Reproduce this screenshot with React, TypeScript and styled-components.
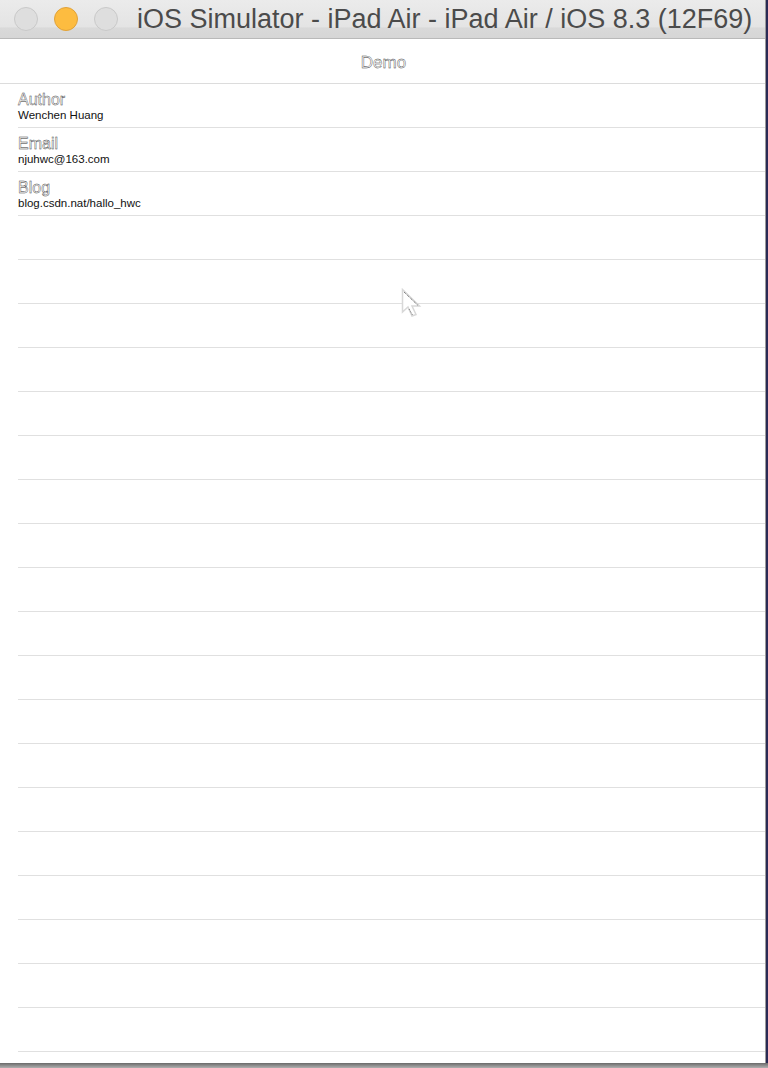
import React from "react";
import styled, { createGlobalStyle } from "styled-components";

const Global = createGlobalStyle`
  html, body { margin: 0; padding: 0; }
  body {
    width: 768px;
    height: 1068px;
    overflow: hidden;
    background: linear-gradient(#8a8a8a, #5a5a5a);
    font-family: "Liberation Sans", Arial, sans-serif;
  }
`;

const Desktop = styled.div`
  width: 768px;
  height: 1068px;
  display: flex;
  flex-direction: column;
  background: #2a2a55;
`;

const Window = styled.div`
  position: relative;
  width: 765px;
  height: 1063px;
  display: flex;
  flex-direction: column;
  background: #ffffff;
  border-right: 1px solid #9a9a9a;
  overflow: hidden;
`;

const BottomShade = styled.div`
  height: 5px;
  background: linear-gradient(#6a6a6a, #b0b0b0);
`;

const TitleBar = styled.div`
  height: 38px;
  display: flex;
  align-items: center;
  background: linear-gradient(#ebebeb 0%, #e4e4e4 70%, #d9d9d9 74%, #d6d6d6 100%);
  border-bottom: 1px solid #b9b9b9;
  padding-left: 14px;
  box-sizing: content-box;
`;

const Light = styled.div<{ $yellow?: boolean }>`
  width: 24px;
  height: 24px;
  border-radius: 50%;
  box-sizing: border-box;
  margin-right: 16px;
  background: ${(p) => (p.$yellow ? "#fdbc40" : "#dedede")};
  border: 1px solid ${(p) => (p.$yellow ? "#e0a23a" : "#c9c9c9")};
`;

const WindowTitle = styled.div`
  margin-left: 3px;
  font-size: 27px;
  color: #4b4b4b;
  white-space: nowrap;
  padding-top: 1px;
`;

const NavBar = styled.div`
  height: 44px;
  display: flex;
  align-items: center;
  justify-content: center;
  border-bottom: 1px solid #dcdcdc;
`;

const NavTitle = styled.div`
  font-size: 17px;
  color: #ffffff;
  -webkit-text-stroke: 0.4px #333333;
  padding-left: 2px;
  padding-top: 4px;
`;

const List = styled.div`
  display: flex;
  flex-direction: column;
`;

const Row = styled.div`
  height: 43px;
  box-sizing: border-box;
  padding-top: 3px;
  margin-left: 18px;
  border-bottom: 1px solid #e0e0e0;
  display: flex;
  flex-direction: column;
  justify-content: center;
  height: 44px;
`;

const RowTitle = styled.div`
  font-size: 16px;
  line-height: 17px;
  color: #ffffff;
  -webkit-text-stroke: 0.4px #333333;
`;

const RowSub = styled.div`
  font-size: 11.5px;
  line-height: 15px;
  color: #111111;
`;

const Cursor = styled.svg`
  position: absolute;
  left: 401px;
  top: 288px;
`;

const rows = [
  { t: "Author", s: "Wenchen Huang" },
  { t: "Email", s: "njuhwc@163.com" },
  { t: "Blog", s: "blog.csdn.nat/hallo_hwc" },
];

export default function App() {
  return (
    <>
      <Global />
      <Desktop>
        <Window>
          <TitleBar>
            <Light />
            <Light $yellow />
            <Light />
            <WindowTitle>iOS Simulator - iPad Air - iPad Air / iOS 8.3 (12F69)</WindowTitle>
          </TitleBar>
          <NavBar>
            <NavTitle>Demo</NavTitle>
          </NavBar>
          <List>
            {rows.map((r) => (
              <Row key={r.t}>
                <RowTitle>{r.t}</RowTitle>
                <RowSub>{r.s}</RowSub>
              </Row>
            ))}
            {Array.from({ length: 19 }).map((_, i) => (
              <Row key={i} />
            ))}
          </List>
          <Cursor width="24" height="36" viewBox="0 0 24 36">
            <path d="M1.5 1.5 L1.5 24 L7 19 L11 28 L15 26.5 L11 18 L18.5 18 Z" fill="#ffffff" stroke="#d8d8d8" strokeWidth="1.5" />
            <path d="M3 4 L16.5 17" stroke="#555" strokeWidth="1" strokeDasharray="1 1" />
            <path d="M8 21 L11.5 27" stroke="#777" strokeWidth="1" strokeDasharray="1 1" />
          </Cursor>
        </Window>
        <BottomShade />
      </Desktop>
    </>
  );
}
